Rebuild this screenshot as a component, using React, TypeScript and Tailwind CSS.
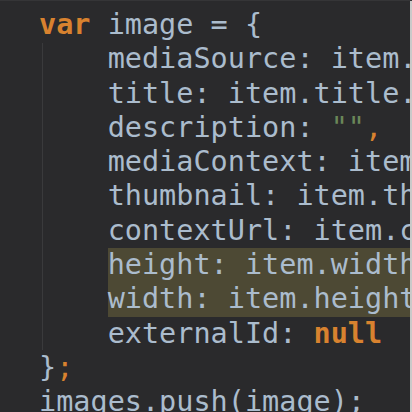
const orange = 'text-[#d8822f] font-bold'
const plain = 'text-[#abbccd]'

type Tok = { t: string; c?: string }

const lines: { toks: Tok[]; indent?: boolean; hl?: boolean }[] = [
  { toks: [{ t: 'var', c: orange }, { t: ' image = {' }] },
  { indent: true, toks: [{ t: 'mediaSource: item.mediaSource,' }] },
  { indent: true, toks: [{ t: 'title: item.title.trim(),' }] },
  { indent: true, toks: [{ t: 'description: ' }, { t: '""', c: 'text-[#6a8759]' }, { t: ',', c: 'text-[#d8822f]' }] },
  { indent: true, toks: [{ t: 'mediaContext: item.mediaContext,' }] },
  { indent: true, toks: [{ t: 'thumbnail: item.thumbnail,' }] },
  { indent: true, toks: [{ t: 'contextUrl: item.contextUrl,' }] },
  { indent: true, hl: true, toks: [{ t: 'height: item.width,' }] },
  { indent: true, hl: true, toks: [{ t: 'width: item.height,' }] },
  { indent: true, toks: [{ t: 'externalId: ' }, { t: 'null', c: orange }] },
  { toks: [{ t: '}' }, { t: ';', c: 'text-[#d8822f]' }] },
  { toks: [{ t: 'images.push(image);' }] },
]

export default function App() {
  return (
    <div className="flex h-[412px] w-[412px] overflow-hidden border-t border-[#353537] bg-[#2a2a2c]">
      <div className="relative flex-1 overflow-hidden pl-[39px] pt-[7px]">
        <div className="absolute left-[42px] top-[42px] h-[307px] w-px bg-[#3a3a3c]" />
        <pre className="font-['DejaVu_Sans_Mono',monospace] text-[28.5px] leading-[34.3px]">
          {lines.map((line, i) => (
            <div key={i} className="flex whitespace-pre">
              {line.indent && <span>{'    '}</span>}
              <span className={`flex-1 ${line.hl ? 'bg-[#4d4934]' : ''}`}>
                {line.toks.map((tok, j) => (
                  <span key={j} className={tok.c ?? plain}>
                    {tok.t}
                  </span>
                ))}
              </span>
            </div>
          ))}
        </pre>
      </div>
      <div className="w-[2px] bg-[#c9c9c9]" />
    </div>
  )
}
